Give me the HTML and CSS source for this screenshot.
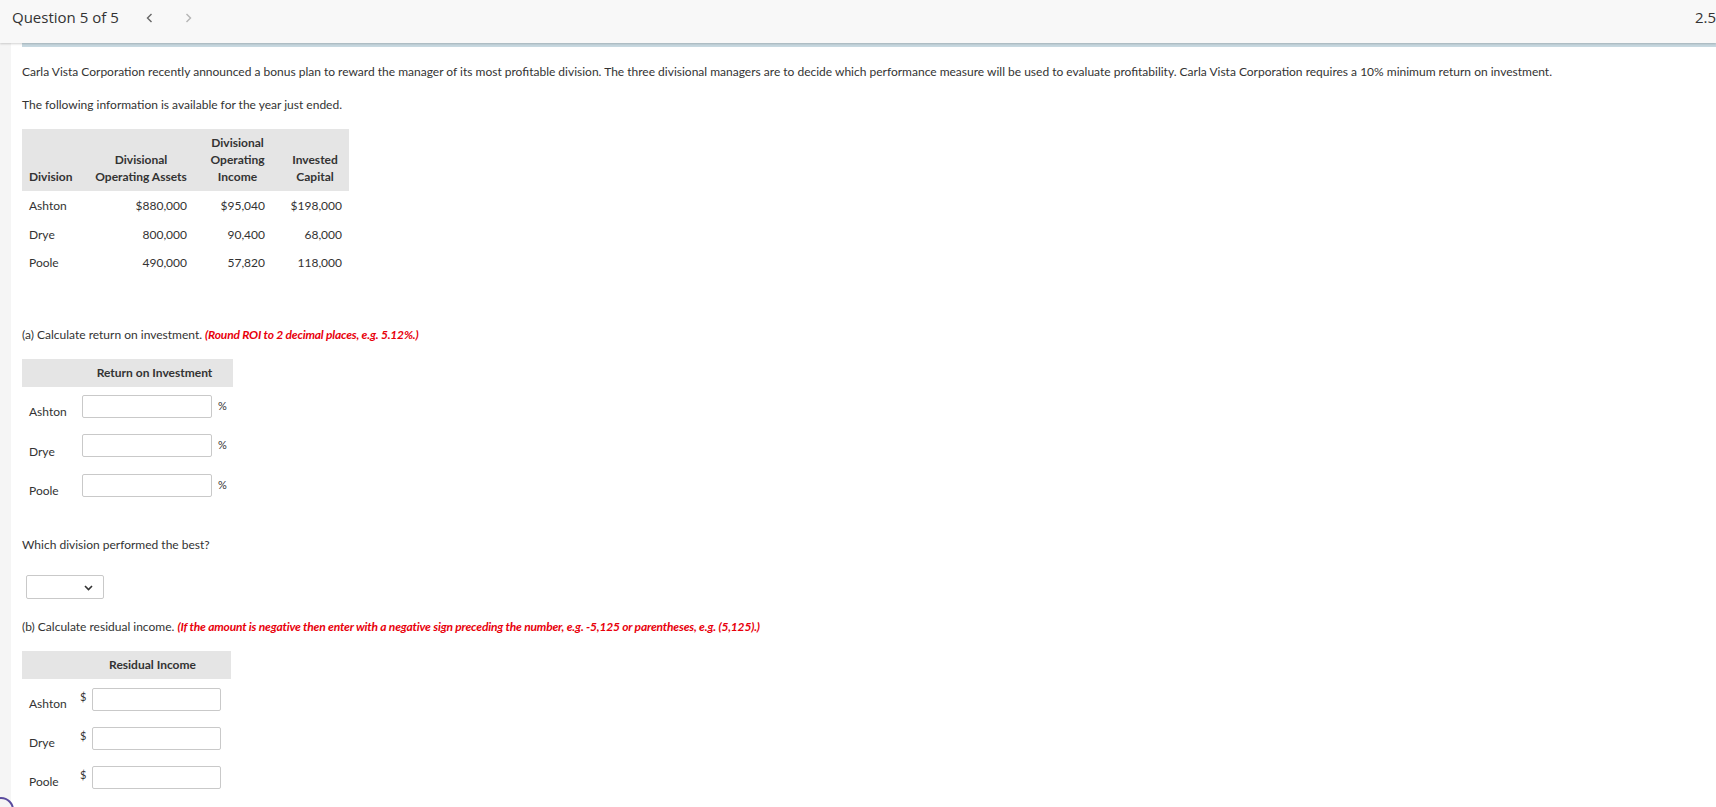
FILE: index.html
```html
<!DOCTYPE html>
<html lang="en">
<head>
    <meta charset="UTF-8">
    <meta name="viewport" content="width=device-width, initial-scale=1.0">
    <title>Question 5 of 5</title>
    <link rel="stylesheet" href="styles.css">
</head>
<body>
    <header class="topbar">
        <span class="question-count">Question 5 of 5</span>
        <span class="nav-arrow prev">
            <svg width="7" height="10" viewBox="0 0 7 10"><polyline points="5.5,1 1.5,5 5.5,9" fill="none" stroke="currentColor" stroke-width="1.4"/></svg>
        </span>
        <span class="nav-arrow next">
            <svg width="7" height="10" viewBox="0 0 7 10"><polyline points="1.5,1 5.5,5 1.5,9" fill="none" stroke="currentColor" stroke-width="1.4"/></svg>
        </span>
        <span class="points">2.5</span>
    </header>

    <div class="layout">
        <div class="rail"></div>
        <main class="question">
            <p>Carla Vista Corporation recently announced a bonus plan to reward the manager of its most profitable division. The three divisional managers are to decide which performance measure will be used to evaluate profitability. Carla Vista Corporation requires a 10% minimum return on investment.</p>
            <p>The following information is available for the year just ended.</p>

            <table class="data-table">
                <colgroup>
                    <col class="w-name">
                    <col class="w-assets">
                    <col class="w-income">
                    <col class="w-capital">
                </colgroup>
                <thead>
                    <tr>
                        <th class="col-name">Division</th>
                        <th>Divisional<br>Operating Assets</th>
                        <th>Divisional<br>Operating<br>Income</th>
                        <th>Invested<br>Capital</th>
                    </tr>
                </thead>
                <tbody>
                    <tr><td>Ashton</td><td class="num">$880,000</td><td class="num">$95,040</td><td class="num">$198,000</td></tr>
                    <tr><td>Drye</td><td class="num">800,000</td><td class="num">90,400</td><td class="num">68,000</td></tr>
                    <tr><td>Poole</td><td class="num">490,000</td><td class="num">57,820</td><td class="num">118,000</td></tr>
                </tbody>
            </table>

            <p class="part-a">(a) Calculate return on investment. <em class="hint">(Round ROI to 2 decimal places, e.g. 5.12%.)</em></p>

            <table class="answer-table roi-table">
                <colgroup>
                    <col class="w-label">
                    <col class="w-field">
                    <col class="w-unit">
                </colgroup>
                <thead>
                    <tr><th class="blank"></th><th colspan="2">Return on Investment</th></tr>
                </thead>
                <tbody>
                    <tr><td class="row-label">Ashton</td><td class="field"><input type="text"></td><td class="unit">%</td></tr>
                    <tr><td class="row-label">Drye</td><td class="field"><input type="text"></td><td class="unit">%</td></tr>
                    <tr><td class="row-label">Poole</td><td class="field"><input type="text"></td><td class="unit">%</td></tr>
                </tbody>
            </table>

            <p class="best-question">Which division performed the best?</p>
            <div class="select-wrap">
                <select>
                    <option></option>
                    <option>Ashton</option>
                    <option>Drye</option>
                    <option>Poole</option>
                </select>
                <svg class="chevron" width="9" height="6" viewBox="0 0 9 6"><polyline points="1,1 4.5,4.5 8,1" fill="none" stroke="#333" stroke-width="1.6"/></svg>
            </div>

            <p class="part-b">(b) Calculate residual income. <em class="hint">(If the amount is negative then enter with a negative sign preceding the number, e.g. -5,125 or parentheses, e.g. (5,125).)</em></p>

            <table class="answer-table ri-table">
                <colgroup>
                    <col class="w-label">
                    <col class="w-unit">
                    <col class="w-field">
                </colgroup>
                <thead>
                    <tr><th class="blank"></th><th colspan="2">Residual Income</th></tr>
                </thead>
                <tbody>
                    <tr><td class="row-label">Ashton</td><td class="unit">$</td><td class="field"><input type="text"></td></tr>
                    <tr><td class="row-label">Drye</td><td class="unit">$</td><td class="field"><input type="text"></td></tr>
                    <tr><td class="row-label">Poole</td><td class="unit">$</td><td class="field"><input type="text"></td></tr>
                </tbody>
            </table>
        </main>
    </div>

    <div class="help-ring"></div>
</body>
</html>
```

FILE: styles.css
```css
html, body {
    margin: 0;
    padding: 0;
    height: 100%;
    overflow: hidden;
}

body {
    font-family: Lato, "Open Sans", sans-serif;
    font-size: 12px;
    line-height: 17px;
    color: #333;
    background: #fff;
}

.topbar {
    position: relative;
    z-index: 2;
    height: 43px;
    box-sizing: border-box;
    padding: 7px 0 0 12px;
    background: #f8f8f8;
    box-shadow: 0 1px 2px rgba(0, 0, 0, 0.18);
    display: flex;
    align-items: flex-start;
    font-family: "Open Sans", sans-serif;
    font-size: 15px;
    line-height: 20px;
    white-space: nowrap;
}

.question-count {
    color: #333;
}

.nav-arrow {
    display: flex;
    padding-top: 6px;
}

.nav-arrow.prev {
    margin-left: 27px;
    color: #666;
}

.nav-arrow.next {
    margin-left: 32px;
    color: #b5b5b5;
}

.points {
    margin-left: auto;
    margin-right: 0;
    color: #333;
}

.layout {
    display: flex;
    min-height: calc(100% - 43px);
}

.rail {
    width: 11px;
    flex-shrink: 0;
    background: #f5f5f5;
}

.question {
    flex: 1;
    padding-left: 11px;
}

.question > p {
    margin: 0;
}

.question > p:first-child {
    border-top: 4px solid #c7d8e0;
    padding-top: 16px;
}

.question > p + p {
    margin-top: 16px;
}

.hint {
    color: #e8000b;
    font-weight: 700;
    font-style: italic;
    letter-spacing: -0.18px;
}

/* data table */
.data-table {
    border-collapse: collapse;
    margin-top: 16px;
    width: 327px;
    table-layout: fixed;
}

.data-table .w-name { width: 57px; }
.data-table .w-assets { width: 115px; }
.data-table .w-income { width: 78px; }
.data-table .w-capital { width: 77px; }

.data-table th {
    background: #e5e5e5;
    font-weight: 700;
    line-height: 17px;
    padding: 5px 7px 6px 16px;
    text-align: center;
    vertical-align: bottom;
    white-space: nowrap;
}

.data-table th.col-name {
    text-align: left;
    padding-left: 7px;
}

.data-table td {
    padding: 6px 7px 5.5px 16px;
    line-height: 17px;
    white-space: nowrap;
}

.data-table td:first-child {
    padding-left: 7px;
}

.data-table td.num {
    text-align: right;
}

.part-a {
    margin-top: 49px !important;
}

/* answer tables */
.answer-table {
    border-collapse: collapse;
    margin-top: 16px;
    table-layout: fixed;
}

.answer-table th {
    background: #e5e5e5;
    font-weight: 700;
    padding: 5px 0 6px;
    line-height: 17px;
    text-align: center;
    white-space: nowrap;
}

.answer-table td {
    padding: 0;
}

.answer-table .row-label {
    vertical-align: bottom;
    padding: 0 0 6px 7px;
}

.answer-table input {
    display: block;
    box-sizing: border-box;
    height: 23px;
    border: 1px solid #c9c9c9;
    border-radius: 2px;
    background: #fff;
    margin: 0;
    padding: 0 4px;
    font: inherit;
}

.roi-table {
    width: 211px;
}

.roi-table .w-label { width: 54px; }
.roi-table .w-field { width: 136px; }
.roi-table .w-unit { width: 21px; }

.roi-table tbody tr {
    height: 39.5px;
}

.roi-table .field {
    vertical-align: top;
    padding: 8px 0 0 6px;
}

.roi-table .field input {
    width: 130px;
}

.roi-table .unit {
    vertical-align: top;
    padding: 8px 0 0 6px;
    line-height: 22px;
    font-size: 11px;
}

.best-question {
    margin-top: 31px !important;
}

.select-wrap {
    position: relative;
    width: 78px;
    height: 24px;
    margin: 22px 0 0 4px;
}

.select-wrap select {
    appearance: none;
    -webkit-appearance: none;
    display: block;
    width: 78px;
    height: 24px;
    border: 1px solid #c9c9c9;
    border-radius: 2px;
    background: #fff;
    margin: 0;
    font: inherit;
    color: #333;
}

.select-wrap .chevron {
    position: absolute;
    left: 58px;
    top: 10px;
    pointer-events: none;
}

.part-b {
    margin-top: 19px !important;
}

.ri-table {
    width: 209px;
}

.ri-table .w-label { width: 52px; }
.ri-table .w-unit { width: 18px; }
.ri-table .w-field { width: 139px; }

.ri-table tbody tr {
    height: 39px;
}

.ri-table .unit {
    vertical-align: top;
    padding: 9px 0 0 6px;
    font-size: 11px;
}

.ri-table .field {
    vertical-align: top;
    padding: 9px 10px 0 0;
}

.ri-table .field input {
    width: 129px;
}

.help-ring {
    position: fixed;
    left: -12px;
    bottom: -16px;
    width: 22px;
    height: 22px;
    border: 2px solid #5a4b9e;
    border-radius: 50%;
}
```
